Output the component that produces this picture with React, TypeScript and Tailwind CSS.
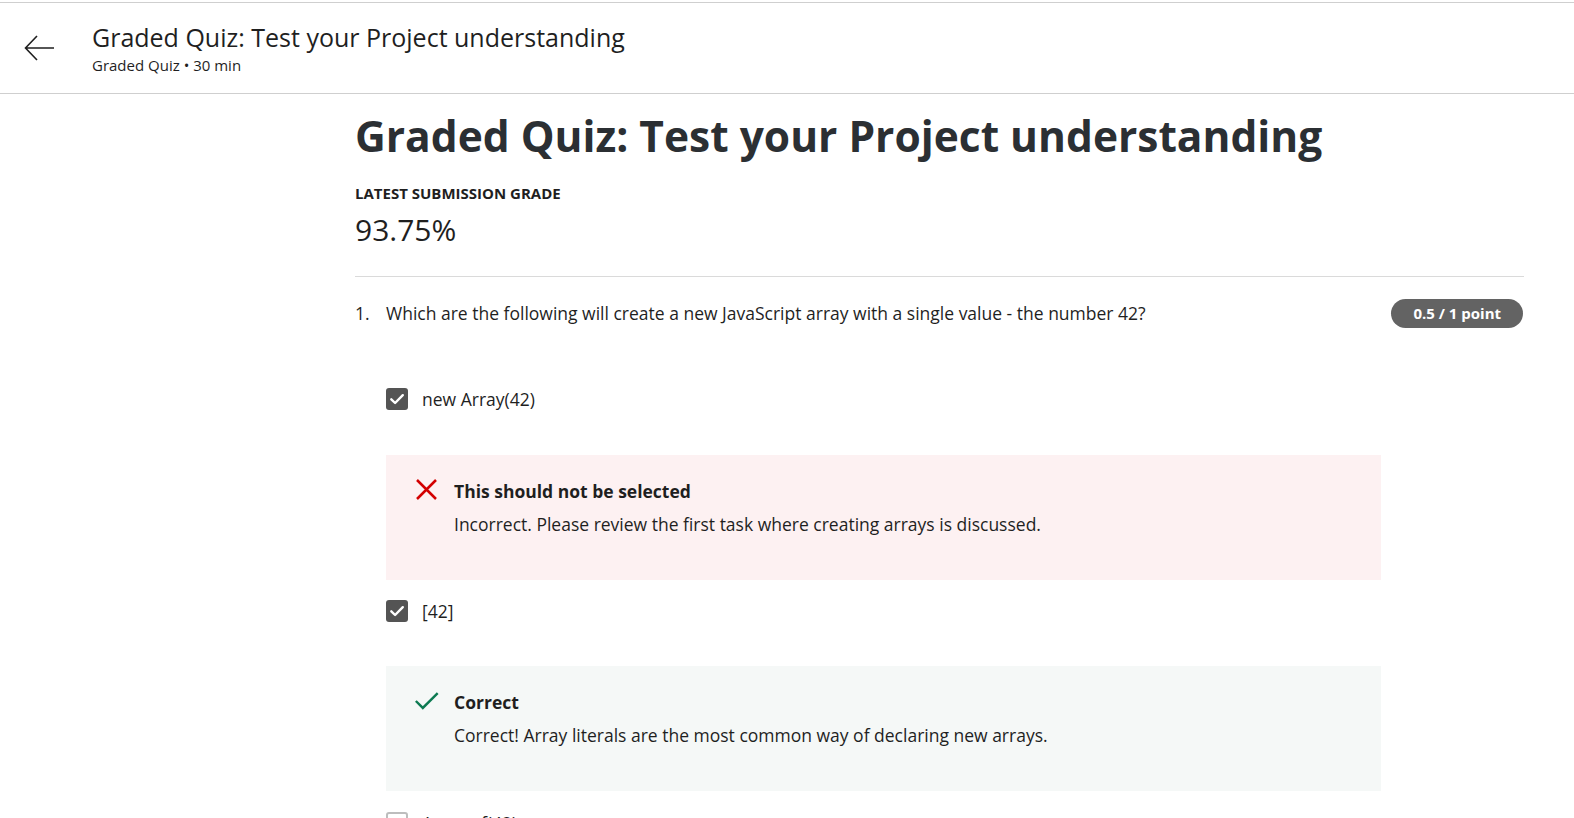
import React from "react";

function Checkbox({ checked }: { checked: boolean }) {
  if (!checked) {
    return <div className="w-[22px] h-[22px] rounded-[3px] border-2 border-[#bdbdbd] bg-white shrink-0" />;
  }
  return (
    <div className="w-[22px] h-[22px] rounded-[3px] bg-[#545454] flex items-center justify-center shrink-0">
      <svg width="16" height="16" viewBox="0 0 16 16" fill="none">
        <path d="M2.3 8.3 L6.1 12 L13.8 4.2" stroke="white" strokeWidth="2.4" strokeLinecap="round" strokeLinejoin="round" />
      </svg>
    </div>
  );
}

function Option({ checked, label }: { checked: boolean; label: string }) {
  return (
    <div className="flex items-center gap-[14px] h-[22px]">
      <Checkbox checked={checked} />
      <span className="text-[17.5px] text-[#1f1f1f]">{label}</span>
    </div>
  );
}

function Feedback({ kind, title, body }: { kind: "bad" | "good"; title: string; body: string }) {
  return (
    <div className={`w-[995px] h-[125px] ${kind === "bad" ? "bg-[#fdf1f2]" : "bg-[#f5f8f7]"} pl-[28px] pt-[24px] flex gap-[14px]`}>
      <div className="w-[26px] h-[26px] flex items-center justify-center mt-[-2px]">
        {kind === "bad" ? (
          <svg width="24" height="24" viewBox="0 0 24 24" fill="none">
            <path d="M2 2 L21 21 M21 2 L2 21" stroke="#d30001" strokeWidth="2.5" />
          </svg>
        ) : (
          <svg width="28" height="22" viewBox="0 0 28 22" fill="none">
            <path d="M2 11 L9.5 18.5 L25.5 2.5" stroke="#0d7a52" strokeWidth="2.6" />
          </svg>
        )}
      </div>
      <div className="flex flex-col">
        <div className="text-[17.5px] font-bold text-[#1f1f1f] leading-[24px]">{title}</div>
        <div className="text-[17.5px] text-[#1f1f1f] leading-[24px] mt-[9px]">{body}</div>
      </div>
    </div>
  );
}

export default function App() {
  return (
    <div className="w-[1574px] h-[818px] overflow-hidden bg-white" style={{ fontFamily: '"Open Sans", sans-serif' }}>
      <div className="h-[2px] bg-white" />
      <header className="h-[92px] border-t border-b border-[#cfcfcf] flex items-center">
        <div className="w-[92px] flex justify-center pl-[2px] pr-[14px]">
          <svg width="34" height="34" viewBox="0 0 34 34" fill="none">
            <path d="M31 17 H3 M14 5 L2.5 17 L14 29" stroke="#1f1f1f" strokeWidth="1.6" />
          </svg>
        </div>
        <div className="flex flex-col">
          <div className="text-[25px] leading-[34px] text-[#1f1f1f]">Graded Quiz: Test your Project understanding</div>
          <div className="text-[15px] leading-[22px] text-[#1f1f1f]">Graded Quiz • 30 min</div>
        </div>
      </header>
      <main className="pl-[355px] pr-[50px]">
        <h1 className="text-[42.5px] font-bold leading-[56px] text-[#2b2f33] mt-[14px]">Graded Quiz: Test your Project understanding</h1>
        <div className="text-[15px] font-bold text-[#1f1f1f] mt-[19px] leading-[20px]">LATEST SUBMISSION GRADE</div>
        <div className="text-[30px] text-[#1f1f1f] leading-[36px] mt-[9px]">93.75%</div>
        <div className="border-t border-[#dadada] mt-[28px]" />
        <div className="flex items-center justify-between mt-[20px]">
          <div className="flex text-[17.5px] text-[#1f1f1f] leading-[24px]">
            <span className="w-[31px]">1.</span>
            <span>Which are the following will create a new JavaScript array with a single value - the number 42?</span>
          </div>
          <div className="h-[29px] px-[22px] rounded-full bg-[#636363] text-white text-[15px] font-bold flex items-center mt-[2px] mr-[1px]">0.5 / 1 point</div>
        </div>
        <div className="pl-[31px] flex flex-col">
          <div className="mt-[60px]"><Option checked label="new Array(42)" /></div>
          <div className="mt-[45px]">
            <Feedback kind="bad" title="This should not be selected" body="Incorrect. Please review the first task where creating arrays is discussed." />
          </div>
          <div className="mt-[20px]"><Option checked label="[42]" /></div>
          <div className="mt-[44px]">
            <Feedback kind="good" title="Correct" body="Correct! Array literals are the most common way of declaring new arrays." />
          </div>
          <div className="mt-[21px]"><Option checked={false} label="Array.of(42)" /></div>
        </div>
      </main>
    </div>
  );
}
